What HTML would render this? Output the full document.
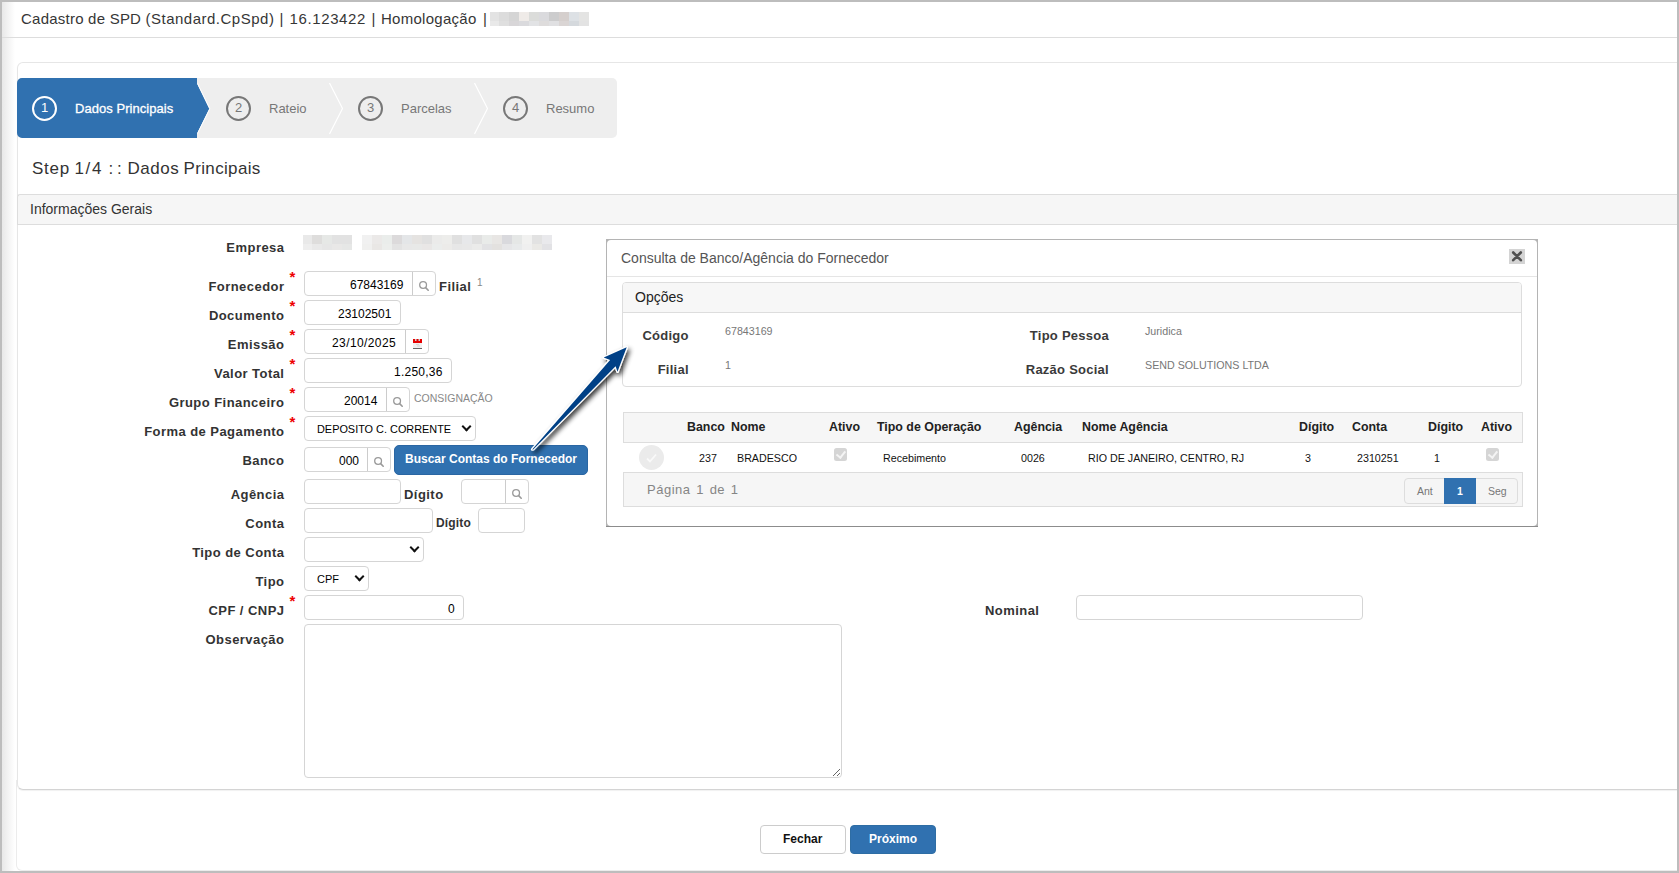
<!DOCTYPE html>
<html><head><meta charset="utf-8">
<style>
*{box-sizing:border-box}
html,body{margin:0;padding:0;width:1679px;height:873px;overflow:hidden;background:#fff;font-family:"Liberation Sans",sans-serif;color:#333}
.a{position:absolute}
.frame{left:0;top:0;width:1679px;height:873px;border:2px solid #bdbdbd;z-index:50;pointer-events:none}
.grad{left:2px;top:2px;width:13px;height:869px;background:linear-gradient(to right,#e8e8e8,#fff)}
.hdr{top:10px;font-size:15px;color:#363636;white-space:nowrap;line-height:17px}
.hline{height:1px;background:#ddd}
.lbl{position:absolute;right:1395px;font-size:13px;letter-spacing:0.45px;margin-right:-0.45px;font-weight:bold;color:#333;white-space:nowrap;line-height:16px}
.ast{position:absolute;left:289.5px;color:#e00;font-size:15px;font-weight:bold;line-height:14px}
.inp{position:absolute;border:1px solid #d5d5d5;border-radius:4px;background:#fff;height:25px}
.v{position:absolute;font-size:12px;color:#000;white-space:nowrap;line-height:14px}
.btnp{position:absolute;border-left:1px solid #ccc;top:0;bottom:0;right:0}
.srch{position:absolute;width:9px;height:9px;border:1.5px solid #999;border-radius:50%}
.srch:after{content:"";position:absolute;width:4px;height:1.6px;background:#999;transform:rotate(45deg);left:5.5px;top:7px}
.t{position:absolute;white-space:nowrap}
.stp{top:159px;font-size:17px;color:#333;line-height:20px}
.step{position:absolute;top:78px;height:60px;font-size:13px;line-height:16px}
.circ{position:absolute;width:25px;height:25px;border:2px solid #777;border-radius:50%;font-size:13px;text-align:center;line-height:19.5px;color:#777}
.chev{position:absolute}
.blk{position:absolute}
.sel{position:absolute}
.chv{position:absolute;width:7px;height:7px;border-right:2.2px solid #111;border-bottom:2.2px solid #111;transform:rotate(45deg)}
.th{position:absolute;top:420px;font-size:12.4px;font-weight:bold;color:#222;white-space:nowrap;line-height:14px}
.td{position:absolute;top:452px;font-size:10.7px;color:#111;white-space:nowrap;line-height:13px}
.ml{position:absolute;font-size:13px;letter-spacing:0.25px;margin-right:-0.25px;font-weight:bold;color:#3a3a3a;white-space:nowrap;line-height:16px;text-align:right}
.mv{position:absolute;font-size:10.7px;color:#777;white-space:nowrap;line-height:13px}
.chk{position:absolute;width:13px;height:13px;background:#d5d5d5;border-radius:2.5px}
.chk:after{content:"";position:absolute;left:4.2px;top:1px;width:3.5px;height:7px;border-right:2px solid #f4f4f4;border-bottom:2px solid #f4f4f4;transform:rotate(38deg)}
</style></head><body>
<div class="a grad"></div>
<div class="a hdr" style="left:21px;letter-spacing:0.23px">Cadastro de SPD</div>
<div class="a hdr" style="left:145.5px;letter-spacing:0.5px">(Standard.CpSpd)</div>
<div class="a hdr" style="left:279.5px">|</div>
<div class="a hdr" style="left:289.5px;letter-spacing:0.62px">16.123422</div>
<div class="a hdr" style="left:371.5px">|</div>
<div class="a hdr" style="left:381px;letter-spacing:0.27px">Homologação</div>
<div class="a hdr" style="left:483px">|</div>
<!-- blurred header block -->
<div class="a" style="left:490px;top:12px;width:99px;height:14px;overflow:hidden"><div class="a" style="left:0px;top:0;width:9px;height:9px;background:#e3e3e3"></div><div class="a" style="left:0px;top:9px;width:9px;height:5px;background:#e9e9e9"></div><div class="a" style="left:9px;top:0;width:10px;height:9px;background:#dcdcdc"></div><div class="a" style="left:9px;top:9px;width:10px;height:5px;background:#dfdfdf"></div><div class="a" style="left:19px;top:0;width:10px;height:9px;background:#d5d5d5"></div><div class="a" style="left:19px;top:9px;width:10px;height:5px;background:#d8d6d8"></div><div class="a" style="left:29px;top:0;width:10px;height:9px;background:#efebe8"></div><div class="a" style="left:29px;top:9px;width:10px;height:5px;background:#dadadd"></div><div class="a" style="left:39px;top:0;width:10px;height:9px;background:#dbdcda"></div><div class="a" style="left:39px;top:9px;width:10px;height:5px;background:#e2e3e5"></div><div class="a" style="left:49px;top:0;width:10px;height:9px;background:#dadadd"></div><div class="a" style="left:49px;top:9px;width:10px;height:5px;background:#dedcdc"></div><div class="a" style="left:59px;top:0;width:10px;height:9px;background:#cccccd"></div><div class="a" style="left:59px;top:9px;width:10px;height:5px;background:#e0e0e2"></div><div class="a" style="left:69px;top:0;width:10px;height:9px;background:#d5cfcd"></div><div class="a" style="left:69px;top:9px;width:10px;height:5px;background:#dad5d4"></div><div class="a" style="left:79px;top:0;width:10px;height:9px;background:#dde1e5"></div><div class="a" style="left:79px;top:9px;width:10px;height:5px;background:#d5d9dd"></div><div class="a" style="left:89px;top:0;width:10px;height:9px;background:#e4e4e3"></div><div class="a" style="left:89px;top:9px;width:10px;height:5px;background:#e3e3e3"></div></div>
<div class="a hline" style="left:2px;top:37px;width:1675px"></div>

<!-- panel -->
<div class="a" style="left:16px;top:780px;width:1680px;height:91px;border:1px solid #ececec;border-top:none;border-radius:0 0 6px 6px"></div>
<div class="a" style="left:17px;top:62px;width:1680px;height:728px;border:1px solid #e6e6e6;border-bottom-color:#d4d4d4;border-radius:6px;background:#fff;box-shadow:0 1px 1px rgba(0,0,0,0.06)"></div>

<!-- step bar -->
<div class="a" style="left:17px;top:78px;width:600px;height:60px;background:#eeeeee;border-radius:5px"></div>
<svg class="a" style="left:17px;top:78px" width="600" height="60">
  <path d="M5 0 H180 V5.5 L192.3 30.7 L180 55.5 V60 H5 A5 5 0 0 1 0 55 V5 A5 5 0 0 1 5 0Z" fill="#3071b0"/>
  <polyline points="180.5,5.5 192.8,30.7 180.5,55.5" fill="none" stroke="#fff" stroke-width="1"/>
  <polyline points="312.5,5 325.5,30.5 312.5,56" fill="none" stroke="#fff" stroke-width="1.2"/>
  <polyline points="457.5,5 470.5,30.5 457.5,56" fill="none" stroke="#fff" stroke-width="1.2"/>
</svg>
<div class="circ" style="left:32px;top:96px;border-color:#fff;color:#fff">1</div>
<div class="t" style="left:75px;top:101px;font-size:13px;color:#fff;line-height:16px;-webkit-text-stroke:0.3px #fff;letter-spacing:0.05px">Dados Principais</div>
<div class="circ" style="left:226px;top:96px">2</div>
<div class="t" style="left:269px;top:101px;font-size:13px;color:#777;line-height:16px">Rateio</div>
<div class="circ" style="left:358px;top:96px">3</div>
<div class="t" style="left:401px;top:101px;font-size:13px;color:#777;line-height:16px">Parcelas</div>
<div class="circ" style="left:503px;top:96px">4</div>
<div class="t" style="left:546px;top:101px;font-size:13px;color:#777;line-height:16px">Resumo</div>

<div class="t stp" style="left:32px;letter-spacing:0.75px">Step</div>
<div class="t stp" style="left:74.5px;letter-spacing:1.6px">1/4</div>
<div class="t stp" style="left:108.5px">:</div>
<div class="t stp" style="left:117px">:</div>
<div class="t stp" style="left:127.5px;letter-spacing:0.5px">Dados</div>
<div class="t stp" style="left:183.5px;letter-spacing:0.35px">Principais</div>

<!-- section bar -->
<div class="a" style="left:17px;top:194px;width:1662px;height:31px;background:#f6f6f6;border:1px solid #ddd;border-right:none;border-radius:3px 0 0 0"></div>
<div class="t" style="left:30px;top:201px;font-size:14px;color:#333;line-height:16px">Informações Gerais</div>

<!-- labels -->
<div class="lbl" style="top:240px">Empresa</div>
<div class="lbl" style="top:279px">Fornecedor</div>
<div class="lbl" style="top:308px">Documento</div>
<div class="lbl" style="top:337px">Emissão</div>
<div class="lbl" style="top:366px">Valor Total</div>
<div class="lbl" style="top:395px">Grupo Financeiro</div>
<div class="lbl" style="top:424px">Forma de Pagamento</div>
<div class="lbl" style="top:453px">Banco</div>
<div class="lbl" style="top:487px">Agência</div>
<div class="lbl" style="top:516px">Conta</div>
<div class="lbl" style="top:545px">Tipo de Conta</div>
<div class="lbl" style="top:574px">Tipo</div>
<div class="lbl" style="top:603px">CPF / CNPJ</div>
<div class="lbl" style="top:632px">Observação</div>
<div class="ast" style="top:270px">*</div>
<div class="ast" style="top:299px">*</div>
<div class="ast" style="top:328px">*</div>
<div class="ast" style="top:357px">*</div>
<div class="ast" style="top:386px">*</div>
<div class="ast" style="top:415px">*</div>
<div class="ast" style="top:594px">*</div>

<!-- empresa blurred -->
<div class="a" style="left:303px;top:235px;width:49px;height:15px;overflow:hidden"><div class="a" style="left:0px;top:0;width:9px;height:9px;background:#e9e9e9"></div><div class="a" style="left:0px;top:9px;width:9px;height:6px;background:#eeeeee"></div><div class="a" style="left:9px;top:0;width:10px;height:9px;background:#dedddc"></div><div class="a" style="left:9px;top:9px;width:10px;height:6px;background:#e9e9e9"></div><div class="a" style="left:19px;top:0;width:10px;height:9px;background:#e6e8e6"></div><div class="a" style="left:19px;top:9px;width:10px;height:6px;background:#e6e6e6"></div><div class="a" style="left:29px;top:0;width:10px;height:9px;background:#e2e2e2"></div><div class="a" style="left:29px;top:9px;width:10px;height:6px;background:#e9e8e7"></div><div class="a" style="left:39px;top:0;width:10px;height:9px;background:#e2e2e2"></div><div class="a" style="left:39px;top:9px;width:10px;height:6px;background:#e6e7e6"></div></div>
<div class="a" style="left:362px;top:235px;width:190px;height:15px;overflow:hidden"><div class="a" style="left:0px;top:0;width:10px;height:9px;background:#f1f1f1"></div><div class="a" style="left:0px;top:9px;width:10px;height:6px;background:#f0f0ef"></div><div class="a" style="left:10px;top:0;width:10px;height:9px;background:#ebe9e8"></div><div class="a" style="left:10px;top:9px;width:10px;height:6px;background:#e9e7e5"></div><div class="a" style="left:20px;top:0;width:10px;height:9px;background:#eaedeb"></div><div class="a" style="left:20px;top:9px;width:10px;height:6px;background:#eceeec"></div><div class="a" style="left:30px;top:0;width:10px;height:9px;background:#dcdadb"></div><div class="a" style="left:30px;top:9px;width:10px;height:6px;background:#e3e3e3"></div><div class="a" style="left:40px;top:0;width:10px;height:9px;background:#e4e6e8"></div><div class="a" style="left:40px;top:9px;width:10px;height:6px;background:#e8e8e8"></div><div class="a" style="left:50px;top:0;width:10px;height:9px;background:#e5e3e1"></div><div class="a" style="left:50px;top:9px;width:10px;height:6px;background:#e8e9e8"></div><div class="a" style="left:60px;top:0;width:10px;height:9px;background:#e0e0e0"></div><div class="a" style="left:60px;top:9px;width:10px;height:6px;background:#e9e7e6"></div><div class="a" style="left:70px;top:0;width:10px;height:9px;background:#ebebea"></div><div class="a" style="left:70px;top:9px;width:10px;height:6px;background:#ebedec"></div><div class="a" style="left:80px;top:0;width:10px;height:9px;background:#ededeb"></div><div class="a" style="left:80px;top:9px;width:10px;height:6px;background:#ecebe9"></div><div class="a" style="left:90px;top:0;width:10px;height:9px;background:#e0e0e0"></div><div class="a" style="left:90px;top:9px;width:10px;height:6px;background:#e7e7e7"></div><div class="a" style="left:100px;top:0;width:10px;height:9px;background:#e7e8ea"></div><div class="a" style="left:100px;top:9px;width:10px;height:6px;background:#e8e8e8"></div><div class="a" style="left:110px;top:0;width:10px;height:9px;background:#e0e0e0"></div><div class="a" style="left:110px;top:9px;width:10px;height:6px;background:#ebebea"></div><div class="a" style="left:120px;top:0;width:10px;height:9px;background:#e9ebe9"></div><div class="a" style="left:120px;top:9px;width:10px;height:6px;background:#e2e2e4"></div><div class="a" style="left:130px;top:0;width:10px;height:9px;background:#e8e6e4"></div><div class="a" style="left:130px;top:9px;width:10px;height:6px;background:#e3e1df"></div><div class="a" style="left:140px;top:0;width:10px;height:9px;background:#d9d9dd"></div><div class="a" style="left:140px;top:9px;width:10px;height:6px;background:#e6e6e8"></div><div class="a" style="left:150px;top:0;width:10px;height:9px;background:#e5e7e6"></div><div class="a" style="left:150px;top:9px;width:10px;height:6px;background:#e8eaeb"></div><div class="a" style="left:160px;top:0;width:10px;height:9px;background:#f1f1f0"></div><div class="a" style="left:160px;top:9px;width:10px;height:6px;background:#efefef"></div><div class="a" style="left:170px;top:0;width:10px;height:9px;background:#e2e2e2"></div><div class="a" style="left:170px;top:9px;width:10px;height:6px;background:#eae9e6"></div><div class="a" style="left:180px;top:0;width:10px;height:9px;background:#e9e9ec"></div><div class="a" style="left:180px;top:9px;width:10px;height:6px;background:#e2e2e5"></div></div>

<!-- fornecedor -->
<div class="inp" style="left:304px;top:271px;width:132px"><div class="btnp" style="width:23px"><svg style="position:absolute;left:3px;top:6px" width="14" height="14"><circle cx="7.1" cy="7" r="3.4" fill="none" stroke="#9a9a9a" stroke-width="1.3"/><path d="M9.6 9.6 L12.2 12.2" stroke="#9a9a9a" stroke-width="1.6" stroke-linecap="round"/></svg></div></div>
<div class="v" style="left:350px;top:278px">67843169</div>
<div class="t" style="left:439px;top:279px;font-size:13px;letter-spacing:0.45px;font-weight:bold;color:#333;line-height:16px">Filial</div>
<div class="t" style="left:477px;top:277px;font-size:10px;color:#888;line-height:11px">1</div>
<!-- documento -->
<div class="inp" style="left:304px;top:300px;width:97px"></div>
<div class="v" style="left:338px;top:307px">23102501</div>
<!-- emissao -->
<div class="inp" style="left:304px;top:329px;width:125px"><div class="btnp" style="width:23px"></div></div>
<div class="v" style="left:332px;top:336px;letter-spacing:0.4px">23/10/2025</div>
<svg class="a" style="left:413px;top:339px" width="9" height="10"><rect x="0" y="0" width="9" height="4" fill="#e60000"/><rect x="2" y="0" width="1.5" height="2" fill="#ccc"/><rect x="5.5" y="0" width="1.5" height="2" fill="#ccc"/><rect x="0" y="4" width="9" height="5" fill="#f0f0f0"/><path d="M3 5.5 H6 M4 7 H7" stroke="#ccc" stroke-width="0.7"/><rect x="0" y="9" width="9" height="1" fill="#666"/></svg>
<!-- valor total -->
<div class="inp" style="left:304px;top:358px;width:148px"></div>
<div class="v" style="left:394px;top:365px;letter-spacing:0.25px">1.250,36</div>
<!-- grupo -->
<div class="inp" style="left:304px;top:387px;width:106px"><div class="btnp" style="width:23px"><svg style="position:absolute;left:3px;top:6px" width="14" height="14"><circle cx="7.1" cy="7" r="3.4" fill="none" stroke="#9a9a9a" stroke-width="1.3"/><path d="M9.6 9.6 L12.2 12.2" stroke="#9a9a9a" stroke-width="1.6" stroke-linecap="round"/></svg></div></div>
<div class="v" style="left:344px;top:394px">20014</div>
<div class="t" style="left:414px;top:392px;font-size:10.5px;color:#888;line-height:13px">CONSIGNAÇÃO</div>
<!-- forma pagamento -->
<div class="inp" style="left:304px;top:416px;width:172px"></div>
<div class="v" style="left:317px;top:422px;font-size:10.9px">DEPOSITO C. CORRENTE</div>
<div class="chv" style="left:463px;top:423px"></div>
<!-- banco -->
<div class="inp" style="left:304px;top:447px;width:87px"><div class="btnp" style="width:23px"><svg style="position:absolute;left:3px;top:6px" width="14" height="14"><circle cx="7.1" cy="7" r="3.4" fill="none" stroke="#9a9a9a" stroke-width="1.3"/><path d="M9.6 9.6 L12.2 12.2" stroke="#9a9a9a" stroke-width="1.6" stroke-linecap="round"/></svg></div></div>
<div class="v" style="left:339px;top:454px">000</div>
<div class="a" style="left:394px;top:445px;width:194px;height:30px;background:#3071b0;border:1px solid #2a66a3;border-radius:5px"></div>
<div class="t" style="left:405px;top:452px;font-size:12px;font-weight:bold;color:#fff;line-height:14px">Buscar Contas do Fornecedor</div>
<!-- agencia -->
<div class="inp" style="left:304px;top:479px;width:97px"></div>
<div class="t" style="left:404px;top:487px;font-size:13px;letter-spacing:0.45px;font-weight:bold;color:#333;line-height:16px">Dígito</div>
<div class="inp" style="left:461px;top:479px;width:68px"><div class="btnp" style="width:23px"><svg style="position:absolute;left:3px;top:6px" width="14" height="14"><circle cx="7.1" cy="7" r="3.4" fill="none" stroke="#9a9a9a" stroke-width="1.3"/><path d="M9.6 9.6 L12.2 12.2" stroke="#9a9a9a" stroke-width="1.6" stroke-linecap="round"/></svg></div></div>
<!-- conta -->
<div class="inp" style="left:304px;top:508px;width:129px"></div>
<div class="t" style="left:436px;top:516px;font-size:12px;letter-spacing:0.15px;font-weight:bold;color:#333;line-height:14px">Dígito</div>
<div class="inp" style="left:478px;top:508px;width:47px"></div>
<!-- tipo conta -->
<div class="inp" style="left:304px;top:537px;width:120px"></div>
<div class="chv" style="left:411px;top:544px"></div>
<!-- tipo -->
<div class="inp" style="left:304px;top:566px;width:65px"></div>
<div class="v" style="left:317px;top:572px;font-size:11px">CPF</div>
<div class="chv" style="left:356px;top:573px"></div>
<!-- cpf -->
<div class="inp" style="left:304px;top:595px;width:160px"></div>
<div class="v" style="left:448px;top:602px">0</div>
<!-- observacao -->
<div class="inp" style="left:304px;top:624px;width:538px;height:154px"></div>
<svg class="a" style="left:832px;top:768px" width="9" height="9"><path d="M8 1 L1 8 M8 5 L5 8" stroke="#666" stroke-width="1"/></svg>

<!-- nominal -->
<div class="t" style="left:985px;top:603px;font-size:13px;letter-spacing:0.45px;font-weight:bold;color:#333;line-height:16px">Nominal</div>
<div class="inp" style="left:1076px;top:595px;width:287px"></div>

<!-- footer buttons -->
<div class="a" style="left:760px;top:825px;width:86px;height:29px;border:1px solid #ccc;border-radius:4px;background:#fff"></div>
<div class="t" style="left:783px;top:832px;font-size:12px;font-weight:bold;color:#111;line-height:14px">Fechar</div>
<div class="a" style="left:850px;top:825px;width:86px;height:29px;border:1px solid #2e6da4;border-radius:4px;background:#3071b0"></div>
<div class="t" style="left:869px;top:832px;font-size:12px;font-weight:bold;color:#fff;line-height:14px">Próximo</div>

<!-- MODAL -->
<div class="a" style="left:606px;top:239px;width:932px;height:288px;background:#b4b4b4;border-bottom:1px solid #8c8c8c"></div>
<div class="a" style="left:607px;top:240px;width:930px;height:286px;border-radius:4px;background:#fff"></div>
<div class="t" style="left:621px;top:250px;font-size:14px;color:#555;line-height:16px">Consulta de Banco/Agência do Fornecedor</div>
<div class="a" style="left:1509px;top:249px;width:16px;height:15px;background:#d4d4d4"></div>
<svg class="a" style="left:1509px;top:249px" width="16" height="15"><path d="M4.2 3.5 L11.8 11.2 M11.8 3.5 L4.2 11.2" stroke="#505050" stroke-width="2.6" stroke-linecap="round"/></svg>
<div class="a hline" style="left:607px;top:276px;width:930px;background:#e5e5e5"></div>
<!-- opcoes -->
<div class="a" style="left:622px;top:282px;width:900px;height:105px;border:1px solid #ddd;border-radius:4px;background:#fff"></div>
<div class="a" style="left:623px;top:283px;width:898px;height:30px;background:#f7f7f7;border-bottom:1px solid #ddd;border-radius:3px 3px 0 0"></div>
<div class="t" style="left:635px;top:289px;font-size:14px;color:#222;line-height:16px">Opções</div>
<div class="ml" style="right:990.5px;top:328px">Código</div>
<div class="mv" style="left:725px;top:325px">67843169</div>
<div class="ml" style="right:990.5px;top:362px">Filial</div>
<div class="mv" style="left:725px;top:359px">1</div>
<div class="ml" style="right:570.3px;top:328px">Tipo Pessoa</div>
<div class="mv" style="left:1145px;top:325px">Juridica</div>
<div class="ml" style="right:570.3px;top:362px">Razão Social</div>
<div class="mv" style="left:1145px;top:359px">SEND SOLUTIONS LTDA</div>

<!-- table -->
<div class="a" style="left:623px;top:412px;width:900px;height:31px;background:#f6f6f6;border:1px solid #ddd"></div>
<div class="a" style="left:623px;top:472px;width:900px;height:35px;background:#f6f6f6;border:1px solid #ddd"></div>
<div class="th" style="left:687px">Banco</div>
<div class="th" style="left:731px">Nome</div>
<div class="th" style="left:829px">Ativo</div>
<div class="th" style="left:877px">Tipo de Operação</div>
<div class="th" style="left:1014px">Agência</div>
<div class="th" style="left:1082px">Nome Agência</div>
<div class="th" style="left:1299px">Dígito</div>
<div class="th" style="left:1352px">Conta</div>
<div class="th" style="left:1428px">Dígito</div>
<div class="th" style="left:1481px">Ativo</div>
<div class="a" style="left:639px;top:445px;width:25px;height:25px;border-radius:50%;background:#ebebeb"></div>
<svg class="a" style="left:639px;top:445px" width="25" height="25"><path d="M8 13.5 L11 16.5 L17 9.5" fill="none" stroke="#f9f9f9" stroke-width="1.8"/></svg>
<div class="td" style="left:699px">237</div>
<div class="td" style="left:737px">BRADESCO</div>
<div class="chk" style="left:834px;top:448px"></div>
<div class="td" style="left:883px">Recebimento</div>
<div class="td" style="left:1021px">0026</div>
<div class="td" style="left:1088px">RIO DE JANEIRO, CENTRO, RJ</div>
<div class="td" style="left:1305px">3</div>
<div class="td" style="left:1357px">2310251</div>
<div class="td" style="left:1434px">1</div>
<div class="chk" style="left:1486px;top:448px"></div>
<div class="t" style="left:647px;top:482px;font-size:13px;color:#858585;line-height:16px;letter-spacing:0.5px;word-spacing:1.6px">Página 1 de 1</div>
<!-- pager -->
<div class="a" style="left:1404px;top:478px;width:114px;height:26px;border:1px solid #ddd;border-radius:4px;background:#f5f5f5"></div>
<div class="a" style="left:1444px;top:478px;width:32px;height:26px;background:#3071b0"></div>
<div class="t" style="left:1417px;top:484.5px;font-size:10.5px;color:#777;line-height:12px">Ant</div>
<div class="t" style="left:1457px;top:484.5px;font-size:10.5px;color:#fff;font-weight:bold;line-height:12px">1</div>
<div class="t" style="left:1488px;top:484.5px;font-size:10.5px;color:#777;line-height:12px">Seg</div>

<!-- arrow -->
<svg class="a" style="left:500px;top:320px;overflow:visible" width="150" height="150">
  <defs><filter id="sh" x="-40%" y="-40%" width="180%" height="180%"><feGaussianBlur in="SourceAlpha" stdDeviation="2.6"/><feOffset dx="2.2" dy="2.6"/><feComponentTransfer><feFuncA type="linear" slope="0.8"/></feComponentTransfer><feMerge><feMergeNode/><feMergeNode in="SourceGraphic"/></feMerge></filter></defs>
  <g filter="url(#sh)">
  <path d="M32.2 129.4 L110.1 39.9 L103.7 37.6 L126.7 27.3 L117.5 51.7 L115.6 46.2 L33.2 129.4 Z" fill="#fff" stroke="#fff" stroke-width="2.6" stroke-linejoin="round" stroke-linecap="round"/>
  <path d="M32.2 129.4 L110.1 39.9 L103.7 37.6 L126.7 27.3 L117.5 51.7 L115.6 46.2 L33.2 129.4 Z" fill="#004186"/>
  </g>
</svg>

<div class="a frame"></div>
</body></html>
